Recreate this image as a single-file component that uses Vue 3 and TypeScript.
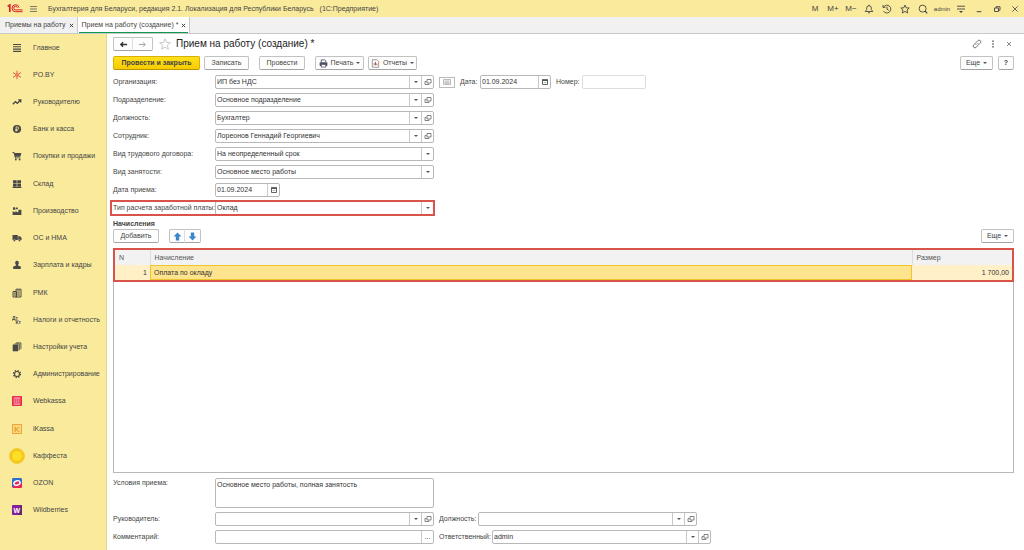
<script setup lang="ts">
import { ref } from 'vue'

interface Section { id: string; title: string }
interface Field { id: string; label: string; value: string; kind: 'ref' | 'select' }

const sections: Section[] = [
  { id: 'main', title: 'Главное' },
  { id: 'poby', title: 'PO.BY' },
  { id: 'chart', title: 'Руководителю' },
  { id: 'bank', title: 'Банк и касса' },
  { id: 'cart', title: 'Покупки и продажи' },
  { id: 'store', title: 'Склад' },
  { id: 'factory', title: 'Производство' },
  { id: 'truck', title: 'ОС и НМА' },
  { id: 'person', title: 'Зарплата и кадры' },
  { id: 'rmk', title: 'РМК' },
  { id: 'tax', title: 'Налоги и отчетность' },
  { id: 'books', title: 'Настройки учета' },
  { id: 'gear', title: 'Администрирование' },
  { id: 'webkassa', title: 'Webkassa' },
  { id: 'ikassa', title: 'iKassa' },
  { id: 'kaffesta', title: 'Каффеста' },
  { id: 'ozon', title: 'OZON' },
  { id: 'wb', title: 'Wildberries' },
]

const fields = ref<Field[]>([
  { id: 'dept', label: 'Подразделение:', value: 'Основное подразделение', kind: 'ref' },
  { id: 'post', label: 'Должность:', value: 'Бухгалтер', kind: 'ref' },
  { id: 'employee', label: 'Сотрудник:', value: 'Лореонов Геннадий Георгиевич', kind: 'ref' },
  { id: 'contract', label: 'Вид трудового договора:', value: 'На неопределенный срок', kind: 'select' },
  { id: 'employment', label: 'Вид занятости:', value: 'Основное место работы', kind: 'select' },
])

const organization = ref('ИП без НДС')
const docDate = ref('01.09.2024')
const docNumber = ref('')
const hireDate = ref('01.09.2024')
const payType = ref('Оклад')
const terms = ref('Основное место работы, полная занятость')
const manager = ref('')
const managerPost = ref('')
const comment = ref('')
const responsible = ref('admin')
const accruals = [{ n: 1, name: 'Оплата по окладу', amount: '1 700,00' }]
</script>

<template>
  <div class="app">
    <svg class="defs" aria-hidden="true">
      <symbol id="i-open" viewBox="0 0 8 8">
        <path d="M3 1.5h4v3.5H3zM2.5 3.5H1v3h4V5.5" fill="none" stroke="#666" stroke-width=".8" />
      </symbol>
      <symbol id="i-cal" viewBox="0 0 8 8">
        <path d="M1.5 2h5v4.5h-5z" fill="#fff" stroke="#555" stroke-width=".9" />
        <path d="M1 1.2h6v1.8H1z" fill="#555" /><path d="M2.5 4.5h3" stroke="#999" stroke-width=".7" />
      </symbol>
    </svg>

    <header class="topbar">
      <svg class="logo" viewBox="0 0 16 9">
        <path d="M.6 2.4L2.8 1v7" fill="none" stroke="#d8202a" stroke-width="1.7" />
        <path d="M12 3.600A3.500 3.500 0 1 0 8.500 7.700H15.600M10.300 3.700A1.800 1.800 0 1 0 8.500 5.900H15.600" fill="none" stroke="#d8202a" stroke-width="1" />
      </svg>
      <button class="flat burger" aria-label="Меню">
        <svg viewBox="0 0 8 8"><path d="M0 1.2h8M0 4h8M0 6.8h8" stroke="#555" stroke-width=".9" /></svg>
      </button>
      <span class="apptitle">Бухгалтерия для Беларуси, редакция 2.1. Локализация для Республики Беларусь</span>
      <span class="platform">(1С:Предприятие)</span>
      <div class="tools">
        <button class="flat mem">M</button>
        <button class="flat mem">M+</button>
        <button class="flat mem">M−</button>
        <button class="flat" aria-label="Уведомления"><svg viewBox="0 0 10 10"><path d="M1.2 7.5h7.6L7.3 5.6V4a2.3 2.3 0 0 0-4.6 0v1.6zM4 8.8h2M5 .8v1" fill="none" stroke="#444" stroke-width=".9" /></svg></button>
        <button class="flat" aria-label="История"><svg viewBox="0 0 10 10"><path d="M1.6 3A3.9 3.9 0 1 1 1.5 7M1 1v2.4h2.4M5 2.7V5.3l1.9 1" fill="none" stroke="#444" stroke-width=".9" /></svg></button>
        <button class="flat" aria-label="Избранное"><svg viewBox="0 0 10 10"><path d="M5 1l1.2 2.8 3 .2L7 6l.7 3L5 7.4 2.3 9 3 6 .8 4l3-.2z" fill="none" stroke="#444" stroke-width=".9" /></svg></button>
        <button class="flat" aria-label="Поиск"><svg viewBox="0 0 10 10"><circle cx="4.6" cy="4.6" r="3.5" fill="none" stroke="#444" stroke-width=".9" /><path d="M7 7l2.3 2.3" stroke="#444" stroke-width="1.1" /></svg></button>
        <button class="flat user">admin</button>
        <button class="flat" aria-label="Настройки"><svg viewBox="0 0 10 10"><path d="M1 2.2h8M1 5h8" stroke="#444" stroke-width=".9" /><path d="M3 7h4L5 9z" fill="#444" /></svg></button>
        <button class="flat" aria-label="Свернуть"><svg viewBox="0 0 10 10"><path d="M2.7 7.7h4.6" stroke="#444" /></svg></button>
        <button class="flat" aria-label="Восстановить"><svg viewBox="0 0 10 10"><path d="M2.5 4h4v3.5h-4zM4 4V2.7h4v3.5H6.5" fill="none" stroke="#444" stroke-width=".9" /></svg></button>
        <button class="flat" aria-label="Закрыть"><svg viewBox="0 0 10 10"><path d="M2.3 2.3l5.4 5.4M7.7 2.3L2.3 7.7" stroke="#555" stroke-width=".9" /></svg></button>
      </div>
    </header>

    <nav class="tabs" aria-label="Открытые окна">
      <div class="tab"><a href="#list">Приемы на работу</a><button class="flat" aria-label="Закрыть вкладку"><svg viewBox="0 0 6 6"><path d="M1 1l4 4M5 1L1 5" stroke="#333" stroke-width="1.1" /></svg></button></div>
      <div class="tab active"><a href="#doc">Прием на работу (создание) *</a><button class="flat" aria-label="Закрыть вкладку"><svg viewBox="0 0 6 6"><path d="M1 1l4 4M5 1L1 5" stroke="#333" stroke-width="1.1" /></svg></button></div>
    </nav>

    <div class="body">
      <nav class="sidebar" aria-label="Разделы">
        <a v-for="s in sections" :key="s.id" :href="'#' + s.id" class="section">
          <span class="ico" :class="{ big: s.id === 'kaffesta' }">
            <svg viewBox="0 0 10 10">
              <path v-if="s.id === 'main'" d="M1 1.5h8M1 3.8h8M1 6.1h8M1 8.4h8" stroke="#4a4848" stroke-width="1.1" />
              <g v-else-if="s.id === 'poby'" stroke="#e0483e" stroke-width=".9">
                <path d="M5 .8v8.4M1 2.6l8 4.8M9 2.6L1 7.4" /><circle cx="5" cy="5" r="1.2" fill="#faeb9c" />
              </g>
              <path v-else-if="s.id === 'chart'" d="M.8 7.3l2.6-2.6L5.3 6.3l3.2-3.2M6.2 2.9h2.6v2.6" fill="none" stroke="#4a4848" stroke-width="1.3" />
              <g v-else-if="s.id === 'bank'">
                <circle cx="5" cy="5" r="4.1" fill="#4a4848" /><path d="M4.2 7.6V2.9h1.2a1.2 1.2 0 0 1 0 2.500H3.3M3.3 6.5h2.4" fill="none" stroke="#faeb9c" stroke-width=".8" />
              </g>
              <g v-else-if="s.id === 'cart'" fill="#4a4848">
                <path d="M.5 1h1.6l.5 1.1h6.8L8.3 5.7H3.5l.2.8h4.8v.8H3L1.6 1.9H.5z" /><circle cx="3.8" cy="8.5" r=".9" /><circle cx="7.6" cy="8.5" r=".9" />
              </g>
              <path v-else-if="s.id === 'store'" d="M1 1.2h3.7v3H1zM5.3 1.2H9v3H5.3zM1 4.8h3.7v3H1zM5.3 4.8H9v3H5.3zM.6 8.1h8.8v.9H.6z" fill="#4a4848" />
              <path v-else-if="s.id === 'factory'" d="M.6 9V5.3L3.4 6.5V5L6 6.4 6.600 3.800H9.400V9zM1 1.200h1.800l.5 2.600H1zM3.600 1.500h2.200v1.700H3.600z" fill="#4a4848" />
              <g v-else-if="s.id === 'truck'" fill="#4a4848">
                <path d="M.5 2h5.3v5H.5zM6.2 3.2h1.9l1.5 1.9V7H6.2z" /><circle cx="2.4" cy="7.5" r="1.1" stroke="#faeb9c" stroke-width=".4" /><circle cx="7.5" cy="7.5" r="1.1" stroke="#faeb9c" stroke-width=".4" />
              </g>
              <path v-else-if="s.id === 'person'" d="M5 .8a1.900 2.100 0 0 1 1.200 3.700L6 5.600l2.800 1V9H1.200V6.600L4 5.600l-.2-1.100A1.900 2.100 0 0 1 5 .8z" fill="#4a4848" />
              <g v-else-if="s.id === 'rmk'">
                <path d="M1 3.5h3.5V9H1zM4 1.2h5V9H4z" fill="#f4e38e" stroke="#4a4848" /><path d="M5.2 2.9h2.6M5.2 5h2.6M5.2 7h2.6M2 5.2h1M2 7h1" stroke="#4a4848" />
              </g>
              <g v-else-if="s.id === 'tax'" class="mini"><text x="0" y="4.5">Дт</text><text x="3.5" y="9.4">Кт</text></g>
              <g v-else-if="s.id === 'books'"><path d="M1 2.800h5V9H1z" fill="#4a4848" stroke="#4a4848" stroke-width=".6" /><path d="M2.600 1.900h4.700v6.300M4 .9h4.900v6.300" fill="none" stroke="#4a4848" stroke-width=".9" /></g>
              <g v-else-if="s.id === 'gear'" fill="none" stroke="#4a4848">
                <circle cx="5" cy="5" r="3.5" stroke-width="1.3" stroke-dasharray="1.4 1.35" /><circle cx="5" cy="5" r="2.5" stroke-width="1.1" />
              </g>
              <g v-else-if="s.id === 'webkassa'">
                <rect width="10" height="10" rx=".8" fill="#e8274b" /><path d="M1.6 2h6.8M1.6 8.1h6.8" stroke="#fff" stroke-width=".8" /><path d="M1.6 4h6.8M1.6 6h6.8" stroke="#ffd2d9" stroke-width="1.1" stroke-dasharray="1.6 .5" />
              </g>
              <g v-else-if="s.id === 'ikassa'">
                <rect x=".5" y=".5" width="9" height="9" fill="#fbd77a" stroke="#eda63a" /><text x="5" y="8" class="k">K</text>
              </g>
              <g v-else-if="s.id === 'kaffesta'">
                <circle cx="5" cy="5" r="4.7" fill="#fbd31c" stroke="#e6ae13" stroke-width=".3" /><circle cx="5" cy="5" r="3.6" fill="#ffdf25" stroke="#dfa812" stroke-width=".4" />
              </g>
              <g v-else-if="s.id === 'ozon'">
                <rect width="10" height="10" rx="1.4" fill="#2d6fd0" /><path d="M0 8.5L10 5v3.6A1.4 1.4 0 0 1 8.600 10H1.400z" fill="#ee2456" /><ellipse cx="5" cy="5" rx="3.2" ry="2.1" transform="rotate(-20 5 5)" fill="#ee2456" stroke="#fff" stroke-width="1.4" />
              </g>
              <g v-else><rect width="10" height="10" rx=".8" fill="#8a1f9c" /><path d="M8.500 0H10v10H6z" fill="#5b2a72" /><text x="4.800" y="7.600" class="w">W</text></g>
            </svg>
          </span>
          <span>{{ s.title }}</span>
        </a>
      </nav>

      <main class="doc">
        <div class="row titlerow">
          <div class="pair">
            <button class="btn" aria-label="Назад"><svg viewBox="0 0 10 8"><path d="M9 4H2M4.500 1.500L2 4l2.500 2.500" fill="none" stroke="#333" stroke-width="1.500" /></svg></button>
            <button class="btn" aria-label="Вперед"><svg viewBox="0 0 10 8"><path d="M1 4h7M5.500 1.500L8 4 5.500 6.500" fill="none" stroke="#999" /></svg></button>
          </div>
          <button class="flat star" aria-label="В избранное"><svg viewBox="0 0 12 12"><path d="M6 .8l1.500 3.600 3.900.300-3 2.600.9 3.900L6 9.100l-3.300 2.100.9-3.900-3-2.600 3.900-.300z" fill="#fff" stroke="#bbb" stroke-width=".8" /></svg></button>
          <h1>Прием на работу (создание) *</h1>
          <div class="winbtns">
            <button class="flat" aria-label="Ссылка"><svg viewBox="0 0 10 10"><path d="M4.200 5.800a1.700 1.700 0 0 1 0-2.400l1.600-1.700a1.700 1.700 0 0 1 2.500 2.400L7.200 5.200M5.800 4.200a1.700 1.700 0 0 1 0 2.400L4.200 8.300a1.700 1.700 0 0 1-2.500-2.400L2.800 4.800" fill="none" stroke="#666" stroke-width=".9" /></svg></button>
            <button class="flat" aria-label="Еще"><svg viewBox="0 0 10 10"><path d="M5 1.500v1.500M5 4.300v1.500M5 7.100v1.500" stroke="#555" stroke-width="1.400" /></svg></button>
            <button class="flat" aria-label="Закрыть"><svg viewBox="0 0 10 10"><path d="M3 3l4 4M7 3L3 7" stroke="#777" stroke-width=".9" /></svg></button>
          </div>
        </div>

        <div class="row toolbar">
          <button class="btn primary">Провести и закрыть</button>
          <button class="btn save">Записать</button>
          <button class="btn post">Провести</button>
          <button class="btn print"><svg viewBox="0 0 10 10"><path d="M2.500 3.500V1h4l1 1v1.500" fill="#fff" stroke="#445" stroke-width=".9" /><rect x=".7" y="3.500" width="8.600" height="4.200" rx=".8" fill="#4c5260" /><path d="M2.500 6h5v3h-5z" fill="#fff" stroke="#445" stroke-width=".8" /></svg>Печать<i class="caret" /></button>
          <button class="btn report"><svg viewBox="0 0 10 10"><path d="M1.500.8h5L8.500 2.800v6.400h-7z" fill="#fff" stroke="#777" stroke-width=".8" /><path d="M3.500 7V4.500" stroke="#397" /><path d="M5 7V3.200M6.500 7V5" stroke="#d33" /></svg>Отчеты<i class="caret" /></button>
          <button class="btn more">Еще<i class="caret" /></button>
          <button class="btn help">?</button>
        </div>

        <div class="form">
          <div class="row">
            <label for="org" class="lbl">Организация:</label>
            <div class="field wide">
              <input id="org" v-model="organization"><button aria-label="Выбрать"><i class="caret" /></button><button aria-label="Открыть"><svg><use href="#i-open" /></svg></button>
            </div>
            <button class="card" aria-label="Подробности"><svg viewBox="0 0 8 6"><path d="M.5.5h7v5h-7zM1.500 2h5M1.500 3.200h5M1.500 4.300h5" fill="none" stroke="#aaa" stroke-width=".8" /></svg></button>
            <label for="date" class="near">Дата:</label>
            <div class="field date main-date"><input id="date" v-model="docDate"><button aria-label="Календарь"><svg><use href="#i-cal" /></svg></button></div>
            <label for="num" class="near num">Номер:</label>
            <div class="field number"><input id="num" v-model="docNumber"></div>
          </div>

          <div v-for="f in fields" :key="f.id" class="row">
            <label :for="f.id" class="lbl">{{ f.label }}</label>
            <div v-if="f.kind === 'ref'" class="field wide">
              <input :id="f.id" v-model="f.value"><button aria-label="Выбрать"><i class="caret" /></button><button aria-label="Открыть"><svg><use href="#i-open" /></svg></button>
            </div>
            <div v-else class="field wide">
              <select :id="f.id" v-model="f.value"><option>{{ f.value }}</option></select><span class="drop"><i class="caret" /></span>
            </div>
          </div>

          <div class="row">
            <label for="hire" class="lbl">Дата приема:</label>
            <div class="field date"><input id="hire" v-model="hireDate"><button aria-label="Календарь"><svg><use href="#i-cal" /></svg></button></div>
          </div>
          <div class="row marked">
            <label for="paytype" class="lbl">Тип расчета заработной платы:</label>
            <div class="field wide">
              <select id="paytype" v-model="payType"><option>Оклад</option></select><span class="drop"><i class="caret" /></span>
            </div>
          </div>
        </div>

        <h2>Начисления</h2>
        <div class="row tabletools">
          <button class="btn add">Добавить</button>
          <div class="pair arrows">
            <button class="btn" aria-label="Вверх"><svg viewBox="0 0 8 8"><path d="M4 .5L7.500 4H5.500v3.500h-3V4h-2z" fill="#3b87c8" /></svg></button>
            <button class="btn" aria-label="Вниз"><svg viewBox="0 0 8 8"><path d="M4 7.500L.5 4h2V.5h3V4h2z" fill="#3b87c8" /></svg></button>
          </div>
          <button class="btn more">Еще<i class="caret" /></button>
        </div>

        <div class="grid">
          <div class="gridmark">
            <table>
              <thead><tr><th class="n">N</th><th>Начисление</th><th class="sum">Размер</th></tr></thead>
              <tbody><tr v-for="a in accruals" :key="a.n"><td class="n">{{ a.n }}</td><td class="current">{{ a.name }}</td><td class="sum">{{ a.amount }}</td></tr></tbody>
            </table>
          </div>
        </div>

        <div class="form foot">
          <div class="row tall">
            <label for="terms" class="lbl">Условия приема:</label>
            <textarea id="terms" v-model="terms" class="wide" />
          </div>
          <div class="row">
            <label for="mgr" class="lbl">Руководитель:</label>
            <div class="field wide"><input id="mgr" v-model="manager"><button aria-label="Выбрать"><i class="caret" /></button><button aria-label="Открыть"><svg><use href="#i-open" /></svg></button></div>
            <label for="mgrpost" class="side">Должность:</label>
            <div class="field wide"><input id="mgrpost" v-model="managerPost"><button aria-label="Выбрать"><i class="caret" /></button><button aria-label="Открыть"><svg><use href="#i-open" /></svg></button></div>
          </div>
          <div class="row">
            <label for="comm" class="lbl">Комментарий:</label>
            <div class="field wide"><input id="comm" v-model="comment"><button aria-label="Редактировать">...</button></div>
            <label for="resp" class="side resp">Ответственный:</label>
            <div class="field wide"><input id="resp" v-model="responsible"><button aria-label="Выбрать"><i class="caret" /></button><button aria-label="Открыть"><svg><use href="#i-open" /></svg></button></div>
          </div>
        </div>
      </main>
    </div>
  </div>
</template>

<style>
body { margin: 0; }
</style>

<style scoped>
*, *::after { box-sizing: border-box; }
.app { display: flex; flex-direction: column; min-height: 100vh; background: #fff; color: #444; font: 7px/10px "Liberation Sans", Arial, sans-serif; }
.defs { position: absolute; width: 0; height: 0; }
button, input, select, textarea { font: inherit; color: inherit; margin: 0; padding: 0; }
svg { display: block; flex: none; }
a { color: inherit; text-decoration: none; }
.flat { border: 0; background: none; display: flex; align-items: center; justify-content: center; }

.topbar { display: flex; align-items: center; height: 17px; padding-left: 7px; background: #faeb9c; }
.logo { width: 16px; height: 9px; }
.burger { margin-left: 7px; }
.burger svg { width: 7px; height: 8px; }
.apptitle { margin-left: 11px; }
.platform { margin-left: 6px; }
.tools { display: flex; margin-left: auto; }
.tools .flat { width: 18px; color: #444; }
.tools .mem { font-size: 8px; }
.tools .user { width: 20px; font-size: 6px; }
.tools svg { width: 10px; height: 10px; }

.tabs { display: flex; height: 17px; background: #f1f1f1; border-bottom: 1px solid #c8c8c8; }
.tab { display: flex; align-items: center; gap: 3px; padding: 0 3px 0 5px; border-right: 1px solid #c8c8c8; }
.tab svg { width: 5px; height: 5px; }
.tab.active { position: relative; padding-left: 4px; background: #fff; }
.tab.active::after { content: ""; position: absolute; left: 1px; right: 1px; bottom: 0; height: 1px; background: #0c9950; }

.body { display: flex; flex: 1; }
.sidebar { display: flex; flex-direction: column; flex: none; width: 107px; padding-bottom: 26px; background: #faeb9c; border-right: 1px solid #e6d68a; }
.section { display: flex; flex: 1; align-items: center; min-height: 20px; }
.ico { display: flex; justify-content: center; width: 33px; }
.ico svg { width: 10px; height: 10px; }
.ico.big svg { width: 16px; height: 16px; }
.mini { font-size: 5px; font-weight: bold; fill: #4a4848; }
.k { font-size: 8px; fill: #d88b1c; text-anchor: middle; }
.w { font-size: 7px; font-weight: bold; fill: #fff; text-anchor: middle; }

.doc { display: flex; flex-direction: column; flex: 1; min-width: 0; padding: 3px 10px 6px 6px; }
.row { display: flex; align-items: center; height: 14px; }
.btn { display: flex; align-items: center; justify-content: center; gap: 3px; height: 14px; border: 1px solid #c2c2c2; border-bottom-color: #a4a4a4; border-radius: 2px; background: #fdfdfd; }
.btn svg { width: 9px; height: 9px; }
.pair { display: flex; }
.pair .btn { width: 20px; }
.pair .btn + .btn { border-left-color: #ddd; border-radius: 0 2px 2px 0; margin-left: -1px; width: 21px; }
.pair .btn:first-child { border-radius: 2px 0 0 2px; border-right-color: #ddd; }
.star { margin-left: 6px; }
.star svg { width: 12px; height: 12px; }
h1 { margin: 0 0 0 5px; font-size: 10px; line-height: 14px; font-weight: normal; color: #222; }
.winbtns { display: flex; gap: 6px; margin-left: auto; }
.winbtns svg { width: 10px; height: 10px; }
.toolbar { margin-top: 5px; }
.primary { width: 87px; background: linear-gradient(#ffe01c, #f7cc00); border-color: #d8b000; border-bottom-color: #b89600; font-weight: bold; }
.save { width: 45px; margin-left: 4px; }
.post { width: 46px; margin-left: 10px; }
.print { width: 49px; margin-left: 10px; }
.report { width: 49px; margin-left: 4px; }
.more { width: 33px; margin-left: auto; }
.help { width: 16px; margin-left: 5px; font-weight: bold; }
.caret { border: 2px solid transparent; border-top-color: #555; border-bottom: 0; }

.form { display: flex; flex-direction: column; gap: 4px; margin-top: 5px; }
.lbl { flex: none; width: 102px; white-space: nowrap; }
.field { display: flex; height: 14px; border: 1px solid #b8b8b8; border-radius: 2px; background: #fff; overflow: hidden; color: #333; }
.field input, .field select { flex: 1; min-width: 0; width: 0; padding: 0 1px; border: 0; outline: 0; background: none; appearance: none; }
.field button, .drop { display: flex; align-items: center; justify-content: center; flex: none; width: 12px; border: 0; border-left: 1px solid #c8c8c8; background: none; }
.field svg { width: 8px; height: 8px; }
.wide { flex: none; width: 219px; }
.date { width: 65px; }
.main-date { width: 71px; }
.number { width: 64px; border-color: #ddd; }
.card { display: flex; align-items: center; justify-content: center; width: 16px; height: 11px; margin-left: 5px; border: 1px solid #bbb; background: #fff; }
.card svg { width: 8px; height: 6px; }
.near { width: 20px; margin-left: 5px; }
.near.num { width: 26px; }
.marked { position: relative; }
.marked::after { content: ""; position: absolute; left: -3px; top: -1px; width: 325px; height: 16px; border: 2px solid #d9534a; pointer-events: none; }

h2 { margin: 4px 0 0; font-size: 7px; line-height: 10px; font-weight: bold; }
.add { width: 46px; }
.arrows { margin-left: 10px; }
.arrows .btn { width: 16px; }
.arrows .btn + .btn { width: 17px; }

.grid { flex: 1; min-height: 60px; margin-top: 6px; border: 1px solid #b8b8b8; }
.gridmark { margin: -2px -1px 0; border: 2px solid #d9534a; }
table { width: 100%; border-collapse: collapse; table-layout: fixed; }
th, td { height: 15px; padding: 0 3px 0 4px; text-align: left; font-weight: normal; }
th { background: #f2f2f2; border-right: 1px solid #ddd; color: #555; }
th:last-child { border-right: 0; }
td { background: #fff0c8; color: #333; }
.n { width: 35px; }
.sum { width: 100px; }
td.n, td.sum { text-align: right; }
td.current { background: #ffe48f; box-shadow: inset 0 0 0 1px #efc52e; }

.tall { height: 30px; align-items: flex-start; }
textarea.wide { display: block; height: 30px; padding: 1px; border: 1px solid #b8b8b8; border-radius: 2px; color: #333; resize: none; outline: 0; }
.side { width: 39px; margin-left: 5px; }
.side.resp { width: 53px; }
</style>
